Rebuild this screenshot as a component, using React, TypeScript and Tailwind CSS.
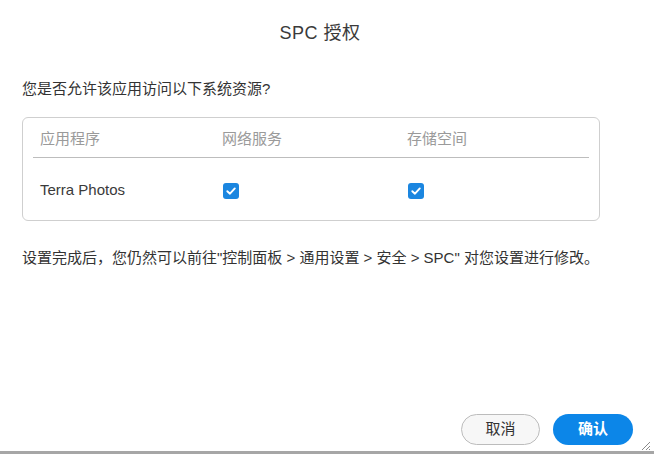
import { useState } from "react";

const FONT = { fontFamily: '"Liberation Sans", "Noto Sans CJK SC", Arial, sans-serif' };

function CheckBox({ checked, onToggle }: { checked: boolean; onToggle: () => void }) {
  return (
    <button
      onClick={onToggle}
      className={`ml-[1px] flex h-[16px] w-[16px] items-center justify-center rounded-[3px] ${
        checked ? "bg-[#1b86e0]" : "border border-[#bbb] bg-white"
      }`}
    >
      {checked && (
        <svg width="12" height="12" viewBox="0 0 12 12" fill="none">
          <path d="M2.3 6.2 L5 8.7 L9.8 3.4" stroke="white" strokeWidth="1.9" strokeLinecap="round" strokeLinejoin="round" />
        </svg>
      )}
    </button>
  );
}

export default function App() {
  const [net, setNet] = useState(true);
  const [storage, setStorage] = useState(true);

  return (
    <div style={FONT} className="relative flex h-[454px] w-[654px] flex-col bg-white text-[#333]">
      {/* title */}
      <div className="flex h-[66px] items-center justify-center pr-[14px] text-[18px] tracking-[0.5px] text-[#3a3a3a]">SPC 授权</div>

      <div className="px-[22px]">
        <p className="mt-[13px] text-[15px] leading-[20px]">您是否允许该应用访问以下系统资源?</p>

        {/* permission table */}
        <div className="mt-[18px] h-[104px] w-[578px] rounded-[6px] border border-[#cfcfcf]">
          <div className="grid h-[39px] grid-cols-[182px_185px_1fr] items-center pt-[4px] pl-[17px] text-[15px] text-[#9a9a9a]">
            <span>应用程序</span>
            <span>网络服务</span>
            <span>存储空间</span>
          </div>
          <div className="mx-[10px] h-[1px] bg-[#bdbdbd]" />
          <div className="grid h-[62px] grid-cols-[182px_185px_1fr] items-center pt-[3px] pl-[17px] text-[15px] text-[#3a3a3a]">
            <span>Terra Photos</span>
            <CheckBox checked={net} onToggle={() => setNet((v) => !v)} />
            <CheckBox checked={storage} onToggle={() => setStorage((v) => !v)} />
          </div>
        </div>

        <p className="mt-[27px] whitespace-nowrap text-[15px] leading-[20px]">
          设置完成后，您仍然可以前往"控制面板 &gt; 通用设置 &gt; 安全 &gt; SPC" 对您设置进行修改。
        </p>
      </div>

      {/* actions */}
      <div className="mt-auto flex justify-end gap-[13px] pr-[21px] pb-[6px]">
        <button className="h-[31px] w-[79px] rounded-full border border-[#bcbcbc] bg-[#f7f7f7] text-[15px] text-[#333]">取消</button>
        <button className="h-[31px] w-[80px] rounded-full bg-[#0c86e8] text-[15px] font-bold text-white">确认</button>
      </div>
      <div className="h-[3px] bg-[#a6a6a6]" />

      {/* resize grip */}
      <svg className="absolute right-[3px] bottom-[3px]" width="12" height="12" viewBox="0 0 12 12">
        <path d="M11 3 L3 11 M11 7 L7 11 M11 10 L10 11" stroke="#8a8a8a" strokeWidth="1" />
      </svg>
    </div>
  );
}
